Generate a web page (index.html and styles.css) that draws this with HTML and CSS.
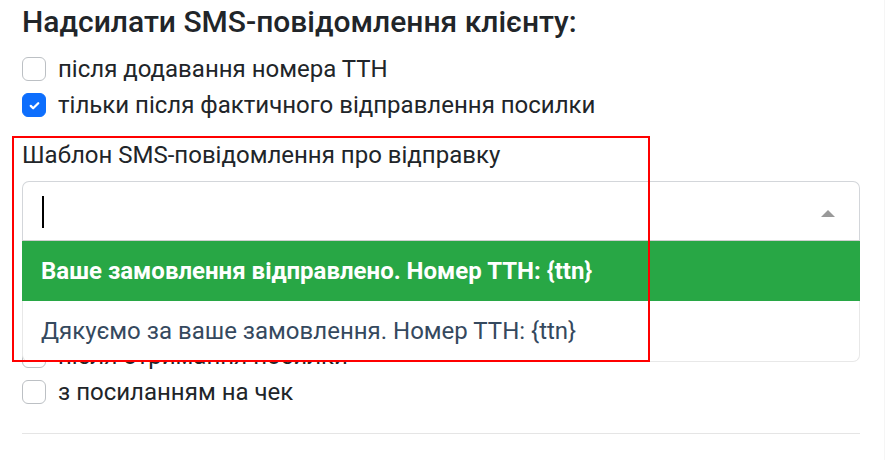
FILE: index.html
```html
<!DOCTYPE html>
<html lang="uk">
<head>
<meta charset="utf-8">
<title>SMS</title>
<link rel="stylesheet" href="styles.css">
</head>
<body>
<div class="page">
  <h5 class="title">Надсилати SMS-повідомлення клієнту:</h5>
  <div class="check"><span class="box"></span><span class="check-label">після додавання номера ТТН</span></div>
  <div class="check"><span class="box checked"><svg viewBox="0 0 20 20" width="15" height="15"><path d="M5 10.5l3.2 3.2L15 7" fill="none" stroke="#fff" stroke-width="3" stroke-linecap="round" stroke-linejoin="round"/></svg></span><span class="check-label">тільки після фактичного відправлення посилки</span></div>
  <div class="group">
    <label class="group-label">Шаблон SMS-повідомлення про відправку</label>
    <div class="ms">
      <div class="ms-tags"><span class="ms-cursor"></span><span class="ms-arrow"></span></div>
      <ul class="ms-content">
        <li class="ms-option active">Ваше замовлення відправлено. Номер ТТН: {ttn}</li>
        <li class="ms-option">Дякуємо за ваше замовлення. Номер ТТН: {ttn}</li>
      </ul>
    </div>
  </div>
  <div class="check"><span class="box"></span><span class="check-label">після отримання посилки</span></div>
  <div class="check"><span class="box"></span><span class="check-label">з посиланням на чек</span></div>
  <hr class="divider">
  <div class="highlight"></div>
</div>
</body>
</html>
```
FILE: styles.css
```css
html, body {
  margin: 0;
  padding: 0;
  background: #fff;
}
body {
  font-family: Roboto, "Liberation Sans", sans-serif;
  color: #212529;
  font-size: 24px;
}
.page {
  position: relative;
  width: 838px;
  padding: 4px 24px 0 22px;
  height: 456px;
  overflow: hidden;
  border-right: 1px solid #f5f5f5;
  box-sizing: content-box;
}
.title {
  margin: 0 0 11px;
  font-size: 30px;
  font-weight: 500;
  line-height: 36px;
}
.check {
  display: flex;
  align-items: flex-start;
  height: 36px;
  line-height: 36px;
}
.box {
  box-sizing: border-box;
  width: 24px;
  height: 24px;
  margin-top: 6px;
  margin-right: 12px;
  border: 1px solid #bcc0c4;
  border-radius: 6px;
  flex: none;
  display: flex;
  align-items: center;
  justify-content: center;
  background: #fff;
}
.box.checked {
  background: #0d6efd;
  border-color: #0d6efd;
}
.group {
  margin: 14px 0 96.5px;
}
.group-label {
  display: block;
  line-height: 36px;
  margin-bottom: 8px;
}
.ms {
  position: relative;
  width: 838px;
}
.ms-tags {
  box-sizing: border-box;
  height: 60px;
  border: 1px solid #d3d6da;
  border-bottom-color: #cfcfcf;
  border-radius: 7px 7px 0 0;
  position: relative;
  background: #fff;
  display: flex;
  align-items: center;
  padding-left: 19px;
}
.ms-cursor {
  width: 1.5px;
  height: 32px;
  background: #000;
  margin-top: 2px;
}
.ms-arrow {
  position: absolute;
  right: 24px;
  top: 28px;
  width: 0;
  height: 0;
  border-left: 7px solid transparent;
  border-right: 7px solid transparent;
  border-bottom: 7px solid #999;
}
.ms-content {
  position: absolute;
  left: 0;
  right: 0;
  top: 100%;
  margin: 0;
  padding: 0;
  list-style: none;
  background: #fff;
  border: 1px solid #e8e8e8;
  border-top: none;
  border-radius: 0 0 7px 7px;
  z-index: 5;
}
.ms-option {
  height: 60px;
  line-height: 60px;
  padding-left: 18px;
  color: #35495e;
  white-space: nowrap;
}
.ms-option.active {
  background: #28a745;
  color: #fff;
  font-weight: 700;
  margin: 0 -1px;
  padding-left: 19px;
}
.divider {
  margin: 23.5px 0 0;
  border: none;
  border-top: 1px solid #e5e5e5;
  width: 838px;
}
.highlight {
  position: absolute;
  left: 12px;
  top: 136px;
  width: 638px;
  height: 226px;
  box-sizing: border-box;
  border: 2px solid #ff0000;
  z-index: 10;
  pointer-events: none;
}
```
